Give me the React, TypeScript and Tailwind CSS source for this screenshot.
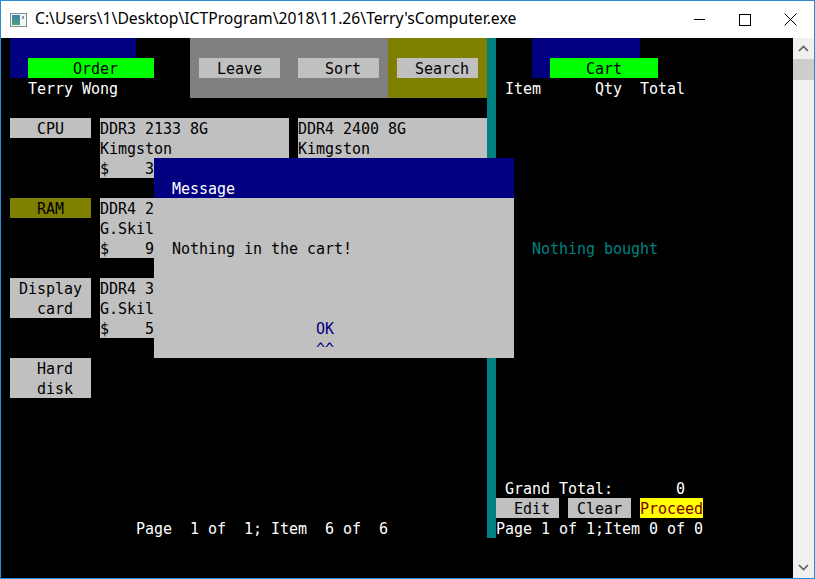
import type { ReactNode } from 'react'

// ── Console cell helper ─────────────────────────────────────────────────────
// The console is a 88 x 27 grid of 9x20 character cells. Every block is
// placed by column/row start + span classes, so overlapping (the dialog) is
// just a later grid item.

interface CellProps {
  pos: string
  className?: string
  children?: ReactNode
}

function Cell({ pos, className = '', children }: CellProps) {
  return <div className={`${pos} whitespace-pre leading-[20px] pt-px ${className}`}>{children}</div>
}

function ConsoleIcon() {
  return (
    <svg width="17" height="14" viewBox="0 0 17 14">
      <rect x="0.5" y="0.5" width="16" height="13" fill="#f4f4f4" stroke="#8a8a8a" />
      <defs>
        <linearGradient id="g" x1="0" y1="0" x2="0" y2="1">
          <stop offset="0" stopColor="#3c7fb0" />
          <stop offset="1" stopColor="#4aa07a" />
        </linearGradient>
      </defs>
      <rect x="2" y="2" width="8" height="10" fill="url(#g)" />
      <rect x="12" y="3" width="2" height="3" fill="#7fa0c0" />
    </svg>
  )
}

export default function App() {
  return (
    <div className="w-[815px] h-[579px] border border-[#2a8ad4] bg-white flex flex-col overflow-hidden">
      {/* ── Title bar ── */}
      <div className="h-[37px] flex items-center shrink-0">
        <div className="w-[34px] flex justify-center pl-[1px]">
          <ConsoleIcon />
        </div>
        <div className="flex-1 text-[15.7px] text-black font-['Noto_Sans',sans-serif] leading-none pb-[1px]">
          C:\Users\1\Desktop\ICTProgram\2018\11.26\Terry'sComputer.exe
        </div>
        <div className="flex h-full">
          <div className="w-[46px] flex items-center justify-center">
            <div className="w-[11px] h-px bg-black" />
          </div>
          <div className="w-[46px] flex items-center justify-center">
            <div className="w-[12px] h-[12px] border border-black" />
          </div>
          <div className="w-[46px] flex items-center justify-center pr-[1px]">
            <svg width="13" height="13" viewBox="0 0 13 13">
              <path d="M0.5 0.5 L12.5 12.5 M12.5 0.5 L0.5 12.5" stroke="#000" strokeWidth="1" />
            </svg>
          </div>
        </div>
      </div>

      {/* ── Body ── */}
      <div className="flex flex-1">
        <div className="w-[792px] h-[540px] bg-black grid grid-cols-[repeat(88,9px)] grid-rows-[repeat(27,20px)] font-['DejaVu_Sans_Mono',monospace] text-[15px] tracking-[-0.03px] text-black overflow-hidden">
          {/* header, left side */}
          <Cell pos="col-start-2 col-span-14 row-start-1 row-span-2" className="bg-[#000080]" />
          <Cell pos="col-start-4 col-span-14 row-start-2" className="bg-[#00ff00]">{'     Order'}</Cell>
          <Cell pos="col-start-4 col-span-12 row-start-3" className="text-white">Terry Wong</Cell>

          <Cell pos="col-start-22 col-span-22 row-start-1 row-span-3" className="bg-[#808080]" />
          <Cell pos="col-start-23 col-span-9 row-start-2" className="bg-[#c0c0c0]">{'  Leave'}</Cell>
          <Cell pos="col-start-34 col-span-9 row-start-2" className="bg-[#c0c0c0]">{'   Sort'}</Cell>
          <Cell pos="col-start-44 col-span-11 row-start-1 row-span-3" className="bg-[#808000]" />
          <Cell pos="col-start-45 col-span-9 row-start-2" className="bg-[#c0c0c0]">{'  Search'}</Cell>

          {/* divider */}
          <Cell pos="col-start-55 col-span-1 row-start-1 row-span-25" className="bg-[#008080]" />

          {/* header, cart side */}
          <Cell pos="col-start-60 col-span-12 row-start-1 row-span-2" className="bg-[#000080]" />
          <Cell pos="col-start-62 col-span-12 row-start-2" className="bg-[#00ff00]">{'    Cart'}</Cell>
          <Cell pos="col-start-57 col-span-22 row-start-3" className="text-white">{'Item      Qty  Total'}</Cell>

          {/* categories */}
          <Cell pos="col-start-2 col-span-9 row-start-5" className="bg-[#c0c0c0]">{'   CPU'}</Cell>
          <Cell pos="col-start-2 col-span-9 row-start-9" className="bg-[#808000]">{'   RAM'}</Cell>
          <Cell pos="col-start-2 col-span-9 row-start-13 row-span-2" className="bg-[#c0c0c0]">{' Display\n   card'}</Cell>
          <Cell pos="col-start-2 col-span-9 row-start-17 row-span-2" className="bg-[#c0c0c0]">{'   Hard\n   disk'}</Cell>

          {/* products */}
          <Cell pos="col-start-12 col-span-21 row-start-5 row-span-3" className="bg-[#c0c0c0]">{'DDR3 2133 8G\nKimgston\n$    380'}</Cell>
          <Cell pos="col-start-34 col-span-21 row-start-5 row-span-3" className="bg-[#c0c0c0]">{'DDR4 2400 8G\nKimgston\n$    420'}</Cell>
          <Cell pos="col-start-12 col-span-21 row-start-9 row-span-3" className="bg-[#c0c0c0]">{'DDR4 2400 16G\nG.Skill\n$    960'}</Cell>
          <Cell pos="col-start-34 col-span-21 row-start-9 row-span-3" className="bg-[#c0c0c0]">{'DDR4 3000 16G\nG.Skill\n$   1020'}</Cell>
          <Cell pos="col-start-12 col-span-21 row-start-13 row-span-3" className="bg-[#c0c0c0]">{'DDR4 3000 8G\nG.Skill\n$    540'}</Cell>
          <Cell pos="col-start-34 col-span-21 row-start-13 row-span-3" className="bg-[#c0c0c0]">{'DDR4 3200 8G\nG.Skill\n$    590'}</Cell>

          {/* cart body */}
          <Cell pos="col-start-60 col-span-20 row-start-11" className="text-[#008080]">Nothing bought</Cell>
          <Cell pos="col-start-57 col-span-24 row-start-23" className="text-white">{'Grand Total:       0'}</Cell>
          <Cell pos="col-start-56 col-span-7 row-start-24" className="bg-[#c0c0c0]">{'  Edit'}</Cell>
          <Cell pos="col-start-64 col-span-7 row-start-24" className="bg-[#c0c0c0]">{' Clear'}</Cell>
          <Cell pos="col-start-72 col-span-7 row-start-24" className="bg-[#ffff00] text-[#800000]">Proceed</Cell>
          <Cell pos="col-start-56 col-span-24 row-start-25" className="text-white">{'Page 1 of 1;Item 0 of 0'}</Cell>

          {/* footer */}
          <Cell pos="col-start-16 col-span-30 row-start-25" className="text-white">{'Page  1 of  1; Item  6 of  6'}</Cell>

          {/* message dialog */}
          <Cell pos="col-start-18 col-span-40 row-start-7 row-span-2" className="bg-[#000080] text-white">{'\n  Message'}</Cell>
          <Cell pos="col-start-18 col-span-40 row-start-9 row-span-8" className="bg-[#c0c0c0]">
            {'\n\n  Nothing in the cart!\n\n\n\n'}
            <span className="text-[#000080]">{'                  OK\n                  ^^'}</span>
          </Cell>
        </div>

        {/* ── Scrollbar ── */}
        <div className="w-[21px] bg-[#f0f0f0] flex flex-col">
          <div className="h-[21px] flex items-center justify-center">
            <svg width="11" height="7" viewBox="0 0 11 7">
              <path d="M1 6 L5.5 1.5 L10 6" fill="none" stroke="#606060" strokeWidth="1.6" />
            </svg>
          </div>
          <div className="h-[21px] bg-[#cdcdcd]" />
          <div className="flex-1" />
          <div className="h-[21px] flex items-center justify-center">
            <svg width="11" height="7" viewBox="0 0 11 7">
              <path d="M1 1 L5.5 5.5 L10 1" fill="none" stroke="#606060" strokeWidth="1.6" />
            </svg>
          </div>
        </div>
      </div>
    </div>
  )
}
